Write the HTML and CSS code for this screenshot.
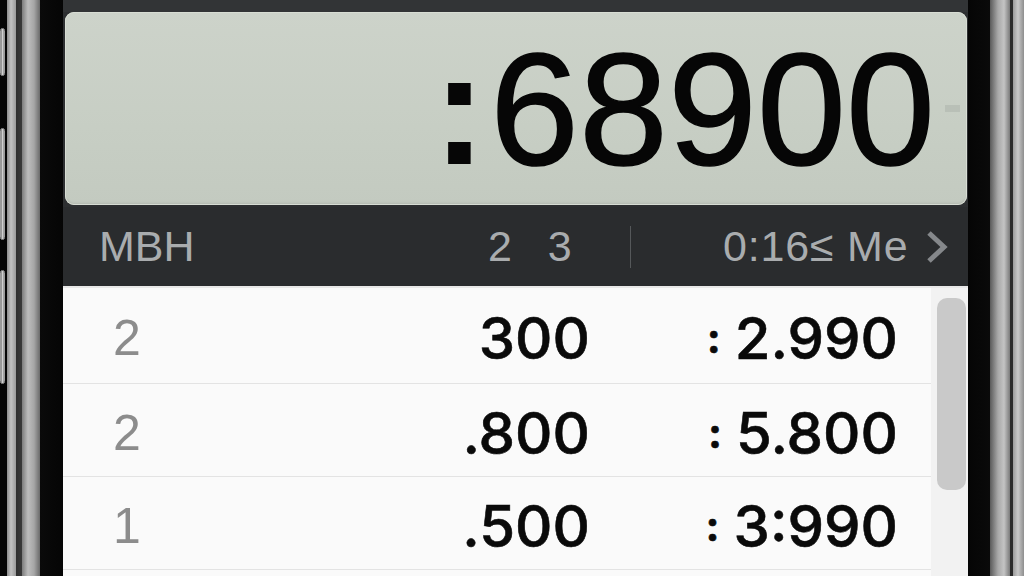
FILE: index.html
```html
<html lang="en">
<head>
  <meta charset="UTF-8">
  <title>Display</title>
  <link rel="stylesheet" href="styles.css">
</head>
<body>
  <div class="phone">
    <div class="rim-left">
      <div class="keys">
        <span class="key k1"></span>
        <span class="key k2"></span>
        <span class="key k3"></span>
      </div>
      <div class="bands"></div>
    </div>

    <div class="screen">
      <div class="topbar"></div>

      <div class="lcd">
        <span class="lcd-colon">:</span><span class="lcd-num">68900</span><span class="ghost"></span>
      </div>

      <header class="bar">
        <span class="bar-title">MBH</span>
        <span class="bar-pages">2&nbsp;&nbsp;&nbsp;3</span>
        <span class="bar-div"></span>
        <span class="bar-time">0:16≤ Me</span>
        <svg class="chev" width="24" height="34" viewBox="0 0 24 34">
          <path d="M4 3 L19 17 L4 31" fill="none" stroke="#85888b" stroke-width="5"/>
        </svg>
      </header>

      <div class="list">
        <div class="rows">
          <div class="row">
            <span class="qty">2</span>
            <span class="mid">300</span>
            <span class="tot"><i>:</i>2.990</span>
          </div>
          <div class="row">
            <span class="qty">2</span>
            <span class="mid">.800</span>
            <span class="tot"><i>:</i>5.800</span>
          </div>
          <div class="row">
            <span class="qty">1</span>
            <span class="mid">.500</span>
            <span class="tot"><i>:</i>3:990</span>
          </div>
          <div class="row"></div>
        </div>
        <div class="track">
          <div class="thumb"></div>
        </div>
      </div>
    </div>

    <div class="rim-right"></div>
  </div>
</body>
</html>
```

FILE: styles.css
```css
* { box-sizing: border-box; }
body, html {
  margin: 0;
  height: 100%;
  background: #000;
  overflow: hidden;
  font-family: "Liberation Sans", Arial, sans-serif;
}

.phone {
  display: flex;
  width: 1024px;
  height: 576px;
}

/* frame */
.rim-left {
  width: 63px;
  display: flex;
}

.keys {
  width: 7px;
  background: #050505;
  display: flex;
  flex-direction: column;
  padding: 28px 2px 0 0;
}

.key {
  display: block;
  border: 1px solid #9a9a9a;
  border-radius: 3px;
  background: linear-gradient(90deg, #7a7a7a, #d0d0d0 50%, #8a8a8a);
}
.k1 { height: 48px; }
.k2 { height: 112px; margin-top: 52px; }
.k3 { height: 114px; margin-top: 30px; }

.bands {
  flex: 1;
  background: linear-gradient(90deg,
    #8c8c8c 0, #c2c2c2 4px, #9a9a9a 9px,
    #2e2e2e 9px, #3a3a3a 15px,
    #7c7c7c 15px, #bdbdbd 21px, #a6a6a6 27px, #6a6a6a 33px,
    #0a0a0a 33px, #050505 56px);
}

.rim-right {
  width: 56px;
  background: linear-gradient(90deg,
    #050505 0, #0a0a0a 22px,
    #5a5a5a 22px, #a8a8a8 30px, #c4c4c4 36px, #7a7a7a 42px,
    #2a2a2a 42px, #2a2a2a 45px,
    #9a9a9a 45px, #c8c8c8 50px, #8e8e8e 56px);
}

/* screen */
.screen {
  width: 905px;
  background: #2d2f31;
  display: flex;
  flex-direction: column;
  overflow: hidden;
}

.topbar {
  flex-shrink: 0;
  height: 12px;
  background: #323436;
}

.lcd {
  flex-shrink: 0;
  height: 193px;
  margin: 0 1px 0 2px;
  border-radius: 9px;
  background: linear-gradient(180deg, #cdd3ca, #c7cec4 60%, #c3cac0);
  box-shadow: inset 0 0 0 1px #d8ddd4, inset 0 -2px 2px rgba(0,0,0,0.08);
  display: flex;
  align-items: center;
  justify-content: flex-end;
  padding-right: 7px;
  color: #060606;
  font-size: 160px;
  line-height: 1;
}

.lcd-num { -webkit-text-stroke: 1.5px #060606; }

.lcd-colon {
  font-weight: bold;
  margin-right: 4px;
}

.ghost {
  width: 15px;
  height: 7px;
  margin-left: 10px;
  background: rgba(0, 0, 0, 0.07);
}

.bar {
  flex-shrink: 0;
  height: 81px;
  margin-top: 2px;
  background: #2a2c2e;
  display: flex;
  align-items: center;
  padding-left: 36px;
  color: #a9acae;
  font-size: 43px;
  border-bottom: 2px solid #e8e8e8;
}

.bar-title { width: 389px; }

.bar-pages { width: 142px; }

.bar-div {
  width: 1px;
  height: 42px;
  background: #55585a;
  margin-right: 92px;
}

.bar-time { letter-spacing: 0.8px; }

.chev { margin-left: 17px; }

/* list */
.list {
  flex: 1;
  min-height: 0;
  display: flex;
  background: #fafafa;
}

.rows { flex: 1; }

.row {
  height: 93px;
  border-bottom: 1px solid #e3e3e3;
  display: flex;
  align-items: center;
  padding-top: 5px;
}
.row:first-child { height: 96px; }

.qty {
  width: 110px;
  padding-left: 50px;
  color: #8c8c8c;
  font-size: 50px;
}

.mid, .tot {
  font-family: Inter, "Liberation Sans", sans-serif;
  font-weight: 500;
  font-size: 58px;
  color: #0a0a0a;
  text-align: right;
  -webkit-text-stroke: 0.6px #0a0a0a;
}

.mid { width: 417px; }

.tot { width: 308px; }

.tot i {
  font-style: normal;
  font-weight: 700;
  font-size: 42px;
  margin-right: 14px;
  vertical-align: 6px;
}

.track {
  width: 37px;
  background: #f2f2f2;
  padding: 10px 2px 0 6px;
}

.thumb {
  height: 192px;
  border-radius: 10px;
  background: #c9c9c9;
}
```
